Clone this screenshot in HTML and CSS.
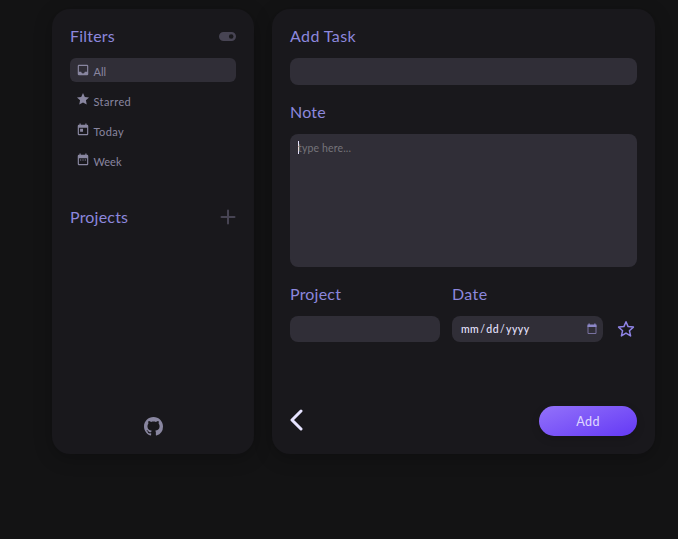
FILE: index.html
```html
<!DOCTYPE html>
<html lang="en">
<head>
<meta charset="utf-8">
<title>Tasks</title>
<link rel="stylesheet" href="styles.css">
</head>
<body>
<main class="app">
  <aside class="panel sidebar">
    <header class="heading-row">
      <h2>Filters</h2>
      <svg class="toggle" viewBox="0 0 17 9"><path fill-rule="evenodd" d="M4.5 0h8a4.5 4.5 0 0 1 0 9h-8a4.5 4.5 0 0 1 0-9zm7.7 2.2a2.3 2.3 0 1 0 0 4.6 2.3 2.3 0 0 0 0-4.6z"/></svg>
    </header>
    <nav class="filters">
      <a class="filter active"><svg viewBox="0 0 24 24"><path d="M19 3H5a2 2 0 0 0-2 2v14a2 2 0 0 0 2 2h14a2 2 0 0 0 2-2V5a2 2 0 0 0-2-2zm0 12h-4a3 3 0 0 1-6 0H5V5h14z"/></svg><span class="tight">All</span></a>
      <a class="filter starred"><svg viewBox="0 0 24 24"><path d="M12 1.800l3.100 6.600 7.200.9-5.300 5 1.400 7.200-6.400-3.500-6.400 3.500L7 14.300l-5.300-5 7.200-.9z"/></svg><span>Starred</span></a>
      <a class="filter"><svg viewBox="0 0 24 24"><path d="M19 3h-1V1h-2v2H8V1H6v2H5a2 2 0 0 0-2 2v14a2 2 0 0 0 2 2h14a2 2 0 0 0 2-2V5a2 2 0 0 0-2-2zm0 16H5V8h14zM7 10h5v5H7z"/></svg><span>Today</span></a>
      <a class="filter"><svg viewBox="0 0 24 24"><path d="M19 3h-1V1h-2v2H8V1H6v2H5a2 2 0 0 0-2 2v14a2 2 0 0 0 2 2h14a2 2 0 0 0 2-2V5a2 2 0 0 0-2-2zm0 16H5V9h14zM7 11h2v2H7zm4 0h2v2h-2zm4 0h2v2h-2z"/></svg><span class="tight">Week</span></a>
    </nav>
    <header class="heading-row">
      <h2>Projects</h2>
      <svg class="plus" viewBox="0 0 16 16"><path d="M8 1.500v13M1.500 8h13"/></svg>
    </header>
    <svg class="github" viewBox="0 0 16 16"><path d="M8 0C3.580 0 0 3.580 0 8c0 3.540 2.290 6.530 5.470 7.590.4.070.550-.170.550-.380 0-.190-.010-.820-.010-1.490-2.010.370-2.530-.490-2.690-.940-.090-.230-.480-.940-.820-1.130-.280-.150-.680-.520-.010-.530.630-.010 1.080.580 1.230.820.720 1.210 1.870.870 2.330.660.070-.520.280-.870.510-1.070-1.780-.2-3.640-.890-3.640-3.950 0-.870.310-1.590.820-2.150-.080-.2-.360-1.020.080-2.120 0 0 .670-.210 2.200.820.640-.180 1.320-.270 2-.270s1.360.090 2 .270c1.530-1.040 2.200-.820 2.200-.820.440 1.100.160 1.920.080 2.120.510.560.820 1.270.820 2.150 0 3.070-1.870 3.750-3.650 3.950.290.250.540.730.540 1.480 0 1.070-.010 1.930-.010 2.200 0 .210.150.460.550.380A8.010 8.010 0 0 0 16 8c0-4.420-3.580-8-8-8z"/></svg>
  </aside>

  <section class="panel editor">
    <h2 class="wide">Add Task</h2>
    <div class="field title-field"></div>
    <h2>Note</h2>
    <div class="field note-field"><i class="caret"></i><span>type here...</span></div>
    <div class="details">
      <h2>Project</h2>
      <h2 class="wide">Date</h2>
      <span></span>
      <div class="field"></div>
      <div class="field date-field"><span>mm<b>/</b>dd<b>/</b>yyyy</span><svg viewBox="0 0 12 12"><path d="M2 2.500h8v8H2z"/><path class="bar" d="M1.500 1.500h9V4h-9zM2.500.5h1.200v2H2.500zM8.300.5h1.200v2H8.300z"/></svg></div>
      <svg class="star" viewBox="0 0 18 18"><path d="M9 1.700l2.100 4.900 5.300.5-4 3.600 1.200 5.200L9 13.100l-4.600 2.800 1.200-5.200-4-3.600 5.300-.5z"/></svg>
    </div>
    <footer class="actions">
      <svg class="back" viewBox="0 0 13 22"><path d="M11 2L2 11l9 9"/></svg>
      <button class="add">Add</button>
    </footer>
  </section>
</main>
</body>
</html>
```
FILE: styles.css
```css
* { box-sizing: border-box; }

body {
  margin: 0;
  height: 539px;
  overflow: hidden;
  background: #131314;
  font-family: Lato, "Liberation Sans", sans-serif;
}

.app {
  display: grid;
  grid-template-columns: 202px 383px;
  gap: 18px;
  height: 454px;
  padding: 9px 0 0 52px;
}

.panel {
  display: flex;
  flex-direction: column;
  padding: 18px;
  border-radius: 18px;
  background: #19181c;
  box-shadow: 0 4px 18px rgba(0, 0, 0, .25);
}

h2 {
  margin: 0;
  height: 19px;
  color: #8c87dd;
  font-size: 16px;
  font-weight: 400;
  letter-spacing: .2px;
  line-height: 17px;
  white-space: nowrap;
}

h2.wide { letter-spacing: .4px; }

svg { display: block; flex: none; }

.heading-row {
  display: flex;
  align-items: center;
  justify-content: space-between;
}

.toggle { width: 17px; height: 9px; fill: #474453; }

.plus {
  width: 16px;
  height: 16px;
  margin-top: -2px;
  fill: none;
  stroke: #474453;
  stroke-width: 2;
  stroke-linecap: round;
}

.filters {
  display: flex;
  flex-direction: column;
  gap: 6px;
  margin: 12px 0 35px;
  padding-bottom: 1px;
}

.filter {
  display: flex;
  align-items: center;
  gap: 4px;
  height: 24px;
  padding-left: 5.5px;
  border-radius: 6px;
  color: #8986a0;
  font-size: 11px;
  letter-spacing: .4px;
  line-height: 14px;
}

.filter.active { background: #302e37; }
.filter svg { width: 14px; height: 14px; fill: #8986a0; }
.filter span { padding-top: 3px; }
.filter .tight { letter-spacing: 0; }
.starred svg { margin-top: -3px; }

.github {
  width: 19px;
  height: 19px;
  margin: auto auto 0;
  fill: #8986a0;
}

.field { border-radius: 8px; background: #302e37; }
.title-field { height: 27px; margin: 12px 0 18px; }

.note-field {
  display: flex;
  height: 133px;
  margin: 12px 0 18px;
  padding: 7px 8px;
  color: #75747a;
  font-size: 10.5px;
  letter-spacing: .15px;
  line-height: 14px;
}

.caret { width: 1px; height: 13px; margin-right: -1px; background: #e6e3ff; }

.details {
  display: grid;
  grid-template-columns: 150px 151px 18px;
  grid-template-rows: 19px 26px;
  column-gap: 12px;
  row-gap: 12px;
}

.date-field {
  display: flex;
  align-items: center;
  justify-content: space-between;
  padding: 0 5px 0 9px;
  color: #e6e3ff;
  font-size: 10.5px;
  font-weight: 500;
  letter-spacing: .4px;
}

.date-field b { padding: 0 1px; font-weight: 400; }
.date-field svg { width: 12px; height: 12px; fill: none; stroke: #78719f; }
.date-field .bar { fill: #8c87c8; stroke: none; }

.star {
  width: 18px;
  height: 18px;
  margin: 4px 0 0 2px;
  fill: none;
  stroke: #8f83e6;
  stroke-width: 1.5;
  stroke-linejoin: round;
}

.actions {
  display: flex;
  align-items: center;
  justify-content: space-between;
  margin-top: auto;
}

.back {
  width: 13px;
  height: 22px;
  margin-bottom: 3px;
  fill: none;
  stroke: #e6e3ff;
  stroke-width: 3;
  stroke-linecap: round;
  stroke-linejoin: round;
}

.add {
  width: 98px;
  height: 30px;
  padding: 0;
  border: 0;
  border-radius: 15px;
  background: linear-gradient(160deg, #9372fa, #6439f5);
  box-shadow: 0 3px 8px rgba(0, 0, 0, .15);
  color: #dcd5ff;
  font: 500 12.5px Lato, sans-serif;
  letter-spacing: .4px;
}
```
